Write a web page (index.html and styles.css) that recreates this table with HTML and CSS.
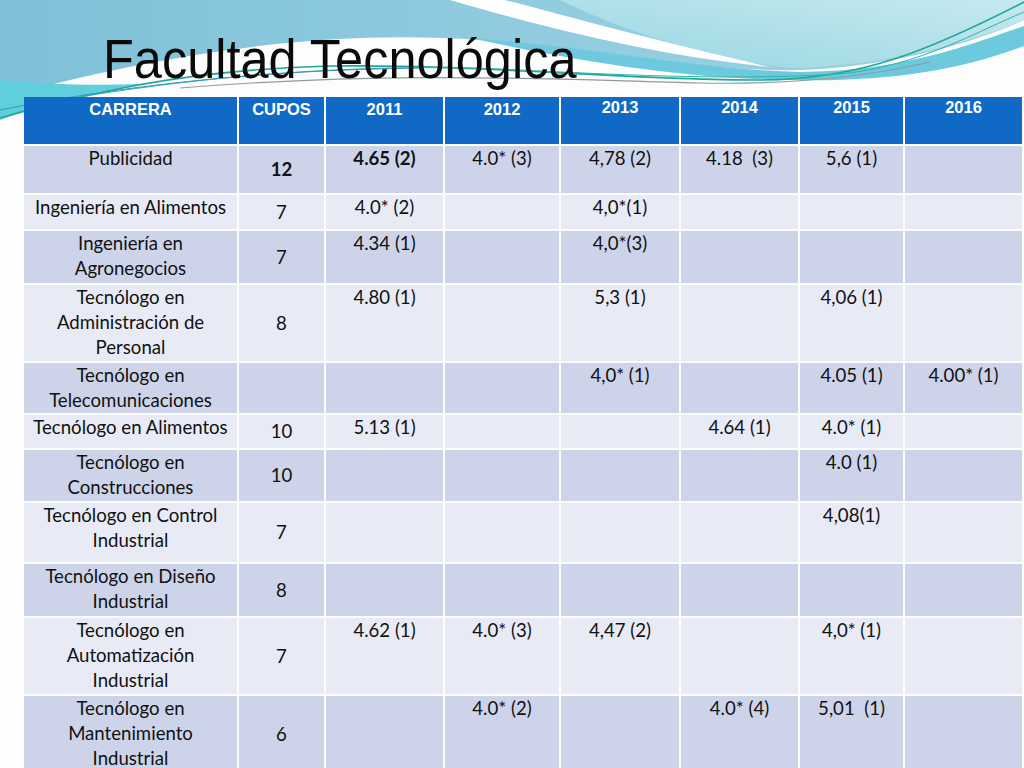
FILE: index.html
```html
<!DOCTYPE html>
<html lang="es">
<head>
<meta charset="utf-8">
<title>Facultad Tecnológica</title>
<link rel="stylesheet" href="styles.css">
</head>
<body>
<div class="slide">
  <svg class="deco" width="1024" height="160" viewBox="0 0 1024 160" aria-hidden="true">
    <defs>
      <linearGradient id="gBlue" x1="0" y1="0" x2="1" y2="0">
        <stop offset="0" stop-color="#7fc1d9"/>
        <stop offset="0.5" stop-color="#90cbdf"/>
        <stop offset="1" stop-color="#9ed3e3"/>
      </linearGradient>
      <linearGradient id="gCyan" x1="0" y1="1" x2="1" y2="0">
        <stop offset="0" stop-color="#97d6e2"/>
        <stop offset="1" stop-color="#c6e9ef"/>
      </linearGradient>
    </defs>
    <path d="M0,0 H1024 V20 C980,40 900,66 800,70 C700,72 600,50 480,40 C340,30 180,48 0,98 Z" fill="url(#gBlue)"/>
    <path d="M0,80 C40,84 90,86 140,84 C90,92 40,105 0,120 Z" fill="#5fcfdc"/>
    <path d="M470,38 C600,48 700,70 800,72 C900,72 970,45 1024,26 V46 C960,70 890,82 790,80 C690,78 600,66 470,38 Z" fill="#6cc9de"/>
    <path d="M540,0 H1024 V20 C960,46 880,66 790,68 C700,58 610,25 560,0 Z" fill="url(#gCyan)"/>
    <path d="M450,0 L505,0 C575,18 660,42 770,67 C680,58 580,38 450,0 Z" fill="#ffffff"/>
    <path d="M0,118 C80,95 180,70 330,66 C480,64 620,80 760,80 C860,80 930,50 1024,2" fill="none" stroke="#1fa79a" stroke-width="1.6"/>
    <path d="M40,104 C200,74 380,62 520,70 C640,76 740,80 840,74 C920,66 980,30 1024,12" fill="none" stroke="#2cb5a8" stroke-width="1"/>
    <path d="M180,88 C400,70 560,80 700,83 C800,85 870,76 930,62" fill="none" stroke="#8d9ba0" stroke-width="1.2"/>
    <path d="M0,110 C120,86 260,70 420,68" fill="none" stroke="#3b8fc6" stroke-width="1"/>
  </svg>

  <h1 class="title">Facultad Tecnológica</h1>

  <table class="grid">
    <colgroup>
      <col class="c-carrera"><col class="c-cupos"><col class="c-y11"><col class="c-y12"><col class="c-y13"><col class="c-y14"><col class="c-y15"><col class="c-y16">
    </colgroup>
    <thead>
      <tr class="h-head">
        <th>CARRERA</th><th>CUPOS</th><th>2011</th><th>2012</th><th class="up">2013</th><th class="up">2014</th><th class="up">2015</th><th class="up">2016</th>
      </tr>
    </thead>
    <tbody>
      <tr class="dark r1">
        <td>Publicidad</td><td class="cupo"><b>12</b></td><td><b>4.65 (2)</b></td><td>4.0* (3)</td><td>4,78 (2)</td><td>4.18&nbsp; (3)</td><td>5,6 (1)</td><td></td>
      </tr>
      <tr class="light r2">
        <td>Ingeniería en Alimentos</td><td class="cupo">7</td><td>4.0* (2)</td><td></td><td>4,0*(1)</td><td></td><td></td><td></td>
      </tr>
      <tr class="dark r3">
        <td>Ingeniería en<br>Agronegocios</td><td class="cupo">7</td><td>4.34 (1)</td><td></td><td>4,0*(3)</td><td></td><td></td><td></td>
      </tr>
      <tr class="light r4">
        <td>Tecnólogo en<br>Administración de<br>Personal</td><td class="cupo">8</td><td>4.80 (1)</td><td></td><td>5,3 (1)</td><td></td><td>4,06 (1)</td><td></td>
      </tr>
      <tr class="dark r5">
        <td>Tecnólogo en<br>Telecomunicaciones</td><td class="cupo"></td><td></td><td></td><td>4,0* (1)</td><td></td><td>4.05 (1)</td><td>4.00* (1)</td>
      </tr>
      <tr class="light r6">
        <td>Tecnólogo en Alimentos</td><td class="cupo">10</td><td>5.13 (1)</td><td></td><td></td><td>4.64 (1)</td><td>4.0* (1)</td><td></td>
      </tr>
      <tr class="dark r7">
        <td>Tecnólogo en<br>Construcciones</td><td class="cupo">10</td><td></td><td></td><td></td><td></td><td>4.0 (1)</td><td></td>
      </tr>
      <tr class="light r8">
        <td>Tecnólogo en Control<br>Industrial</td><td class="cupo">7</td><td></td><td></td><td></td><td></td><td>4,08(1)</td><td></td>
      </tr>
      <tr class="dark r9">
        <td>Tecnólogo en Diseño<br>Industrial</td><td class="cupo">8</td><td></td><td></td><td></td><td></td><td></td><td></td>
      </tr>
      <tr class="light r10">
        <td>Tecnólogo en<br>Automatización<br>Industrial</td><td class="cupo">7</td><td>4.62 (1)</td><td>4.0* (3)</td><td>4,47 (2)</td><td></td><td>4,0* (1)</td><td></td>
      </tr>
      <tr class="dark r11">
        <td>Tecnólogo en<br>Mantenimiento<br>Industrial</td><td class="cupo">6</td><td></td><td>4.0* (2)</td><td></td><td>4.0* (4)</td><td>5,01&nbsp; (1)</td><td></td>
      </tr>
    </tbody>
  </table>
</div>
</body>
</html>
```

FILE: styles.css
```css
html, body {
  margin: 0;
  padding: 0;
  background: #fdfdfd;
}

.slide {
  position: relative;
  width: 1024px;
  height: 768px;
  overflow: hidden;
  background: #fdfdfd;
}

.deco {
  position: absolute;
  left: 0;
  top: 0;
  z-index: 0;
}

.title {
  position: relative;
  z-index: 1;
  margin: 33px 0 0 103px;
  height: 56px;
  font-family: "Liberation Sans", Arial, sans-serif;
  font-weight: normal;
  font-size: 50.5px;
  line-height: 56px;
  color: #0a0a0a;
  transform: scaleY(1.09);
  transform-origin: 0 45px;
  white-space: nowrap;
}

.grid {
  position: relative;
  z-index: 1;
  margin: 6px 0 0 22px;
  border-collapse: separate;
  border-spacing: 2px;
  table-layout: fixed;
  width: 1002px;
  font-family: Lato, "Open Sans", sans-serif;
  font-size: 18.6px;
  color: #111111;
}

.c-carrera { width: 213px; }
.c-cupos { width: 85px; }
.c-y11 { width: 117px; }
.c-y12 { width: 114px; }
.c-y13 { width: 118px; }
.c-y14 { width: 117px; }
.c-y15 { width: 103px; }
.c-y16 { width: 117px; }

.grid th {
  background: #1169c6;
  color: #ffffff;
  font-family: "Liberation Sans", Arial, sans-serif;
  font-weight: bold;
  font-size: 16.5px;
  line-height: 20px;
  text-align: center;
  vertical-align: top;
  padding: 2px 0 0 0;
  height: 45px;
}

.grid th.up {
  padding-top: 0;
  height: 47px;
}

.grid td {
  padding: 0 4px;
  text-align: center;
  vertical-align: top;
  line-height: 25px;
  white-space: nowrap;
}

.grid td.cupo {
  vertical-align: middle;
}

.grid b { font-weight: bold; }

.dark td { background: #cdd4e9; }
.light td { background: #e8ebf5; }

.r1 td { height: 47px; }
.r2 td { height: 34px; }
.r3 td { height: 52px; }
.r4 td { height: 76px; }
.r5 td { height: 50px; }
.r6 td { height: 33px; }
.r7 td { height: 51px; }
.r8 td { height: 59px; }
.r9 td { height: 52px; }
.r10 td { height: 76px; }
.r11 td { height: 76px; }
```
